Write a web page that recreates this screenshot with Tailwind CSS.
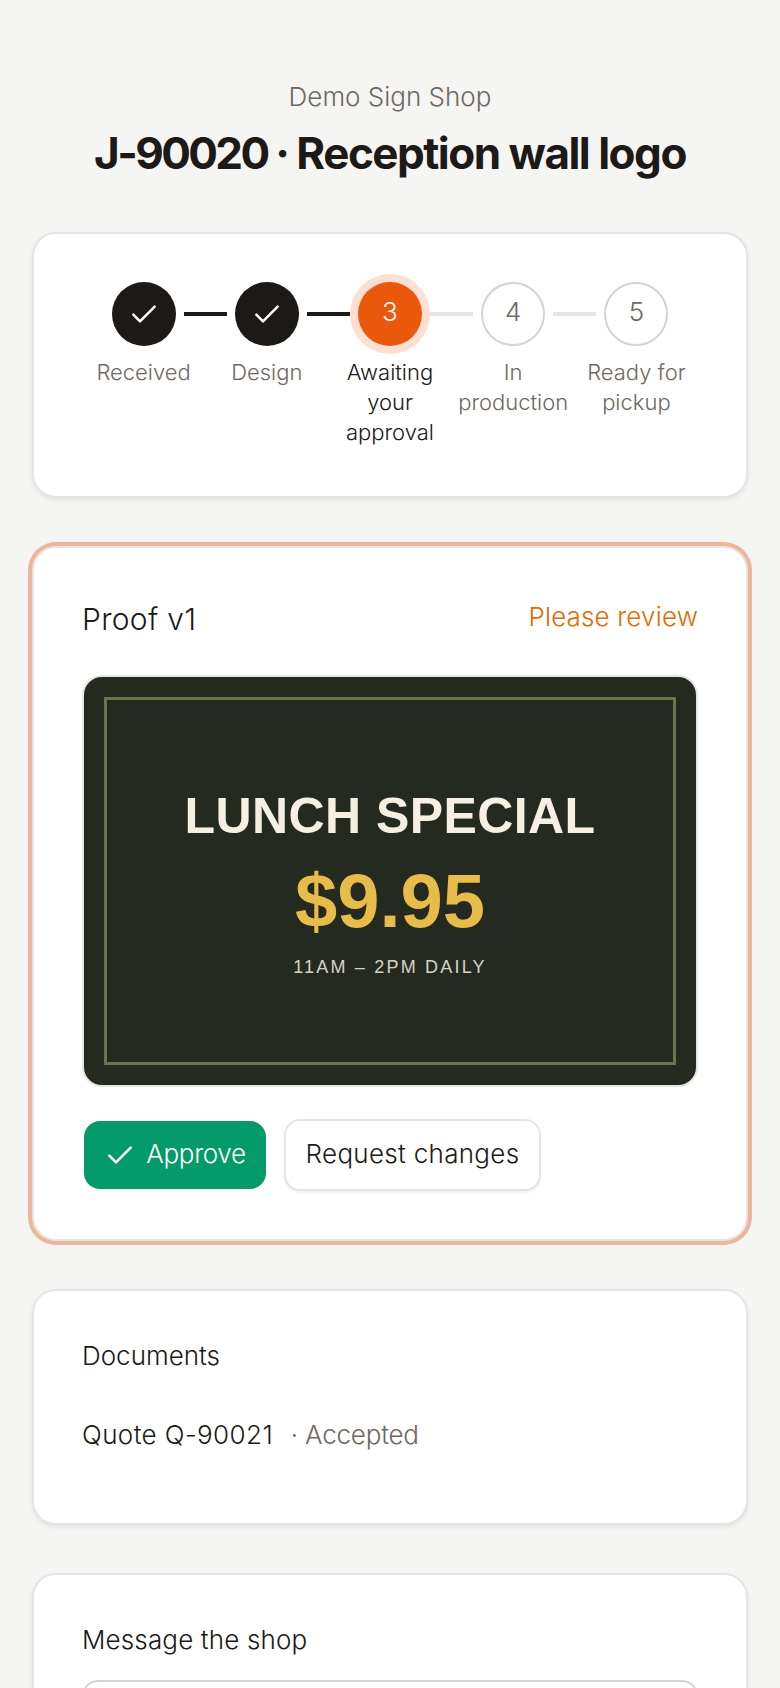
<!doctype html>
<html lang="en">
<head>
<meta charset="utf-8">
<script src="https://cdn.jsdelivr.net/npm/@tailwindcss/browser@4"></script>
</head>
<body class="bg-[#f5f5f3] font-['Inter',sans-serif] text-[#1c1917] overflow-hidden h-[1688px]">
<main class="px-[32px] pt-[80px] flex flex-col gap-[48px] h-[1688px] overflow-hidden">
  <header class="shrink-0 text-center h-[104px]">
    <p class="text-[26px] leading-[34px] font-light text-[#6f6862]">Demo Sign Shop</p>
    <h1 class="mt-[11px] text-[44px] leading-[56px] font-bold tracking-[-1.5px]"><span class="tracking-[-2.6px]">J-90020 ·</span> Reception wall logo</h1>
  </header>

  <section class="shrink-0 bg-white rounded-[24px] border-2 border-[#e7e5e4] shadow-[0_2px_4px_rgba(0,0,0,0.08)] px-[48px] pt-[48px] pb-[49px]">
    <ol class="grid grid-cols-5 text-center text-[22px] leading-[30px] font-light text-[#6f6862]">
      <li class="relative flex flex-col items-center">
        <span class="w-[64px] h-[64px] rounded-full bg-[#1c1917] flex items-center justify-center"><svg class="w-[32px] h-[32px]" viewBox="0 0 24 24" fill="none" stroke="#fff" stroke-width="1.9" stroke-linecap="round" stroke-linejoin="round"><path d="M4 12.5l5 5L20 6.5"/></svg></span>
        <span class="absolute left-[calc(50%+40px)] top-[30px] w-[43px] h-[4px] bg-[#1c1917]"></span>
        <span class="mt-[11px] px-[6px]">Received</span>
      </li>
      <li class="relative flex flex-col items-center">
        <span class="w-[64px] h-[64px] rounded-full bg-[#1c1917] flex items-center justify-center"><svg class="w-[32px] h-[32px]" viewBox="0 0 24 24" fill="none" stroke="#fff" stroke-width="1.9" stroke-linecap="round" stroke-linejoin="round"><path d="M4 12.5l5 5L20 6.5"/></svg></span>
        <span class="absolute left-[calc(50%+40px)] top-[30px] w-[43px] h-[4px] bg-[#1c1917]"></span>
        <span class="mt-[11px] px-[6px]">Design</span>
      </li>
      <li class="relative flex flex-col items-center">
        <span class="w-[64px] h-[64px] rounded-full bg-[#ea580c] text-white text-[26px] font-light flex items-center justify-center pb-[4px] shadow-[0_0_0_8px_#fde0d2]">3</span>
        <span class="absolute left-[calc(50%+40px)] top-[30px] w-[43px] h-[4px] bg-[#e7e5e4]"></span>
        <span class="mt-[11px] px-[6px] text-[#1c1917]">Awaiting your approval</span>
      </li>
      <li class="relative flex flex-col items-center">
        <span class="w-[64px] h-[64px] rounded-full bg-white border-2 border-[#d6d3d1] text-[26px] flex items-center justify-center pb-[4px]">4</span>
        <span class="absolute left-[calc(50%+40px)] top-[30px] w-[43px] h-[4px] bg-[#e7e5e4]"></span>
        <span class="mt-[11px] px-[6px]">In production</span>
      </li>
      <li class="relative flex flex-col items-center">
        <span class="w-[64px] h-[64px] rounded-full bg-white border-2 border-[#d6d3d1] text-[26px] flex items-center justify-center pb-[4px]">5</span>
        <span class="mt-[11px] px-[6px]">Ready for pickup</span>
      </li>
    </ol>
  </section>

  <section class="shrink-0 bg-white rounded-[24px] border-2 border-[#e7e5e4] shadow-[0_0_0_4px_#efb59a,0_2px_4px_rgba(0,0,0,0.08)] px-[48px] pt-[51px] pb-[48px]">
    <div class="flex justify-between items-start">
      <h2 class="text-[30px] leading-[40px] font-light tracking-[0.3px]">Proof v1</h2>
      <span class="mt-[1px] text-[26px] leading-[34px] font-light tracking-[0.15px] text-[#e06c00]">Please review</span>
    </div>
    <div class="relative mt-[36px] h-[412px] rounded-[20px] bg-[#252a20] border-2 border-[#e7e5e4] flex flex-col items-center font-['Liberation_Sans',sans-serif]">
      <span class="absolute inset-[20px] border-[3px] border-[#6b7350]"></span>
      <p class="mt-[111px] text-[50px] leading-[56px] font-bold tracking-[0.4px] text-[#f5f0e1]">LUNCH SPECIAL</p>
      <p class="mt-[15px] text-[76px] leading-[84px] font-bold text-[#e8bc4a]">$9.95</p>
      <p class="mt-[12px] text-[18px] leading-[24px] tracking-[2.2px] text-[#d6d3c4]">11AM – 2PM DAILY</p>
    </div>
    <div class="mt-[32px] ml-[2px] flex items-center gap-[18px]">
      <button class="h-[68px] w-[182px] rounded-[16px] bg-[#059a69] text-white text-[26px] font-light tracking-[-0.3px] flex items-center justify-center gap-[10px] pb-[4px]"><svg class="w-[32px] h-[32px] mt-[4px]" viewBox="0 0 24 24" fill="none" stroke="#fff" stroke-width="1.9" stroke-linecap="round" stroke-linejoin="round"><path d="M4 12.5l5 5L20 6.5"/></svg>Approve</button>
      <button class="h-[72px] w-[257px] rounded-[16px] bg-white border-2 border-[#e7e5e4] shadow-[0_2px_3px_rgba(0,0,0,0.06)] text-[26px] font-light tracking-[0.3px] pb-[4px]">Request changes</button>
    </div>
  </section>

  <section class="shrink-0 bg-white rounded-[24px] border-2 border-[#e7e5e4] shadow-[0_2px_4px_rgba(0,0,0,0.08)] px-[48px] pt-[48px] h-[236px]">
    <h2 class="text-[26px] leading-[34px] font-light">Documents</h2>
    <p class="mt-[45px] text-[26px] leading-[34px] font-light tracking-[0.4px]">Quote Q-90021 <span class="ml-[10px] tracking-[-0.2px] text-[#6f6862]">· Accepted</span></p>
  </section>

  <section class="shrink-0 bg-white rounded-[24px] border-2 border-[#e7e5e4] shadow-[0_2px_4px_rgba(0,0,0,0.08)] px-[48px] pt-[48px]">
    <h2 class="text-[26px] leading-[34px] font-light tracking-[0.15px]">Message the shop</h2>
    <div class="mt-[23px] h-[140px] rounded-[16px] border-2 border-[#d6d3d1]"></div>
  </section>
</main>
</body>
</html>
